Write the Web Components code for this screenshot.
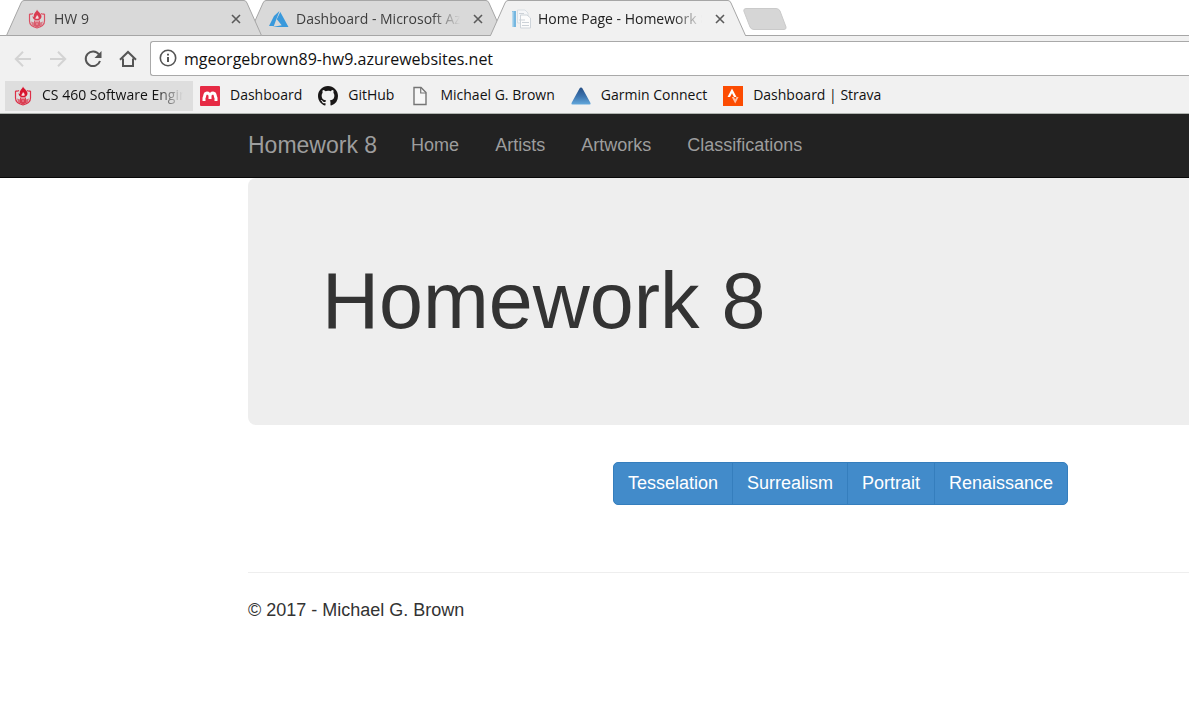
<!DOCTYPE html>
<html lang="en">
<head>
<meta charset="utf-8">
<title>Home Page - Homework 8</title>
<style>
  body { margin: 0; background: #fff; font-family: "Liberation Sans", Arial, sans-serif; }
</style>
</head>
<body>
<browser-frame>
  <tab-strip slot="tabs">
    <browser-tab class="front"><site-icon slot="icon" name="shield"></site-icon>HW 9</browser-tab>
    <browser-tab><site-icon slot="icon" name="azure"></site-icon>Dashboard - Microsoft Azure</browser-tab>
    <browser-tab active><site-icon slot="icon" name="pages"></site-icon>Home Page - Homework 8</browser-tab>
  </tab-strip>
  <address-bar slot="toolbar" url="mgeorgebrown89-hw9.azurewebsites.net"></address-bar>
  <bookmark-bar slot="bookmarks">
    <bookmark-item current><site-icon slot="icon" name="shield"></site-icon>CS 460 Software Engineering</bookmark-item>
    <bookmark-item><site-icon slot="icon" name="mendeley"></site-icon>Dashboard</bookmark-item>
    <bookmark-item><site-icon slot="icon" name="github"></site-icon>GitHub</bookmark-item>
    <bookmark-item><site-icon slot="icon" name="document"></site-icon>Michael G. Brown</bookmark-item>
    <bookmark-item><site-icon slot="icon" name="garmin"></site-icon>Garmin Connect</bookmark-item>
    <bookmark-item><site-icon slot="icon" name="strava"></site-icon>Dashboard | Strava</bookmark-item>
  </bookmark-bar>
  <site-navbar brand="Homework 8">
    <nav-link>Home</nav-link>
    <nav-link>Artists</nav-link>
    <nav-link>Artworks</nav-link>
    <nav-link>Classifications</nav-link>
  </site-navbar>
  <site-body>
    <jumbo-tron>Homework 8</jumbo-tron>
    <button-group>
      <group-button>Tesselation</group-button>
      <group-button>Surrealism</group-button>
      <group-button>Portrait</group-button>
      <group-button>Renaissance</group-button>
    </button-group>
    <site-footer>© 2017 - Michael G. Brown</site-footer>
  </site-body>
</browser-frame>

<script>
const define = (name, html, setup) => {
  const template = document.createElement('template');
  template.innerHTML = html;
  customElements.define(name, class extends HTMLElement {
    constructor() {
      super();
      this.attachShadow({ mode: 'open' }).append(template.content.cloneNode(true));
    }
    connectedCallback() { if (setup) setup(this, this.shadowRoot); }
  });
};

const icons = {
  shield: `<path d="M2.500 5Q4.500 5.500 6 4.500M17.500 5Q15.500 5.500 14 4.500" fill="none" stroke="#dc3048" stroke-width="1.300"/>
    <path d="M2.500 5V12C2.500 16 6 18 10 19C14 18 17.500 16 17.500 12V5" fill="none" stroke="#dc3048" stroke-width="1.200"/>
    <path d="M10 .5C11 3 14.500 4.500 14.500 7.500C14.500 9.500 13 10.500 12 11H8C7 10.500 5.500 9.500 5.500 7C6 7.500 6.700 8 7 7.500C6 4.500 9.500 3 10 .5Z" fill="#d9152f"/>
    <path d="M10 6C11.300 7.500 12 8 11.500 9.700H8.500C8 8.500 9.500 8 10 6Z" fill="#f9dfe2"/>
    <path d="M7 11.500H13V17L10 18.500L7 17Z" fill="#d9152f" opacity=".8"/>
    <path d="M4 12.500L7 13.500V17.500Q4.500 16 4 12.500ZM16 12.500L13 13.500V17.500Q15.500 16 16 12.500Z" fill="#d9152f" opacity=".6"/>
    <path d="M8 12.700H12M9 15H11" stroke="#f3b6be" stroke-width=".8"/>`,
  azure: `<path d="M10.500 2L5 7L0 17H4.800Z" fill="#3999dc"/><path d="M11.300 3L19.500 18H3.500L12.700 16.200L7.800 10.200Z" fill="#3999dc"/>`,
  pages: `<path d="M1 2H5V18H1Z" fill="#57a9dc"/><path d="M1 3L2.500 2V18H1Z" fill="#a9d5ee"/>
    <path d="M6.500 1H14L17 4V14H6.500Z" fill="#f6f8fa" stroke="#d3dae0"/>
    <path d="M9.500 6H16L19.500 9V19H9.500Z" fill="#fff" stroke="#c6ced5"/>
    <path d="M8 4.500H13M8 11H14M11 13.500H18M11 16.500H18" stroke="#c3cbd3"/>`,
  mendeley: `<rect width="20" height="20" rx="1" fill="#e62b45"/>
    <path d="M4 15V12C5.500 9 4 7.500 7 7C9 7 9 8.500 10 8.500S11 7 13 7C16 7.500 14.500 9 16 12V15" fill="none" stroke="#fff" stroke-width="3"/>
    <path d="M10 8V13" stroke="#fff" stroke-width="3"/>`,
  github: `<path transform="scale(1.25)" fill="#191717" d="M8 0C3.580 0 0 3.580 0 8c0 3.540 2.290 6.530 5.470 7.590.4.070.55-.17.55-.38 0-.19-.01-.82-.01-1.490-2.010.37-2.530-.49-2.690-.94-.09-.23-.48-.94-.82-1.130-.28-.15-.68-.52-.01-.53.63-.01 1.080.58 1.230.82.72 1.210 1.870.87 2.330.66.07-.52.28-.87.51-1.070-1.780-.2-3.640-.89-3.640-3.950 0-.87.31-1.590.82-2.150-.08-.2-.36-1.020.08-2.120 0 0 .67-.21 2.200.82A7.600 7.600 0 0 1 8 3.860c.68 0 1.360.09 2 .27 1.530-1.040 2.200-.82 2.200-.82.44 1.100.16 1.920.08 2.120.51.56.82 1.270.82 2.150 0 3.070-1.870 3.750-3.650 3.950.29.25.54.73.54 1.480 0 1.070-.01 1.930-.01 2.200 0 .21.15.46.55.38A8 8 0 0 0 16 8c0-4.420-3.580-8-8-8z"/>`,
  document: `<path d="M4 1.500H11L16 6.500V18.500H4Z" fill="#f7f7f7" stroke="#757575" stroke-width="1.400"/><path d="M10.700 1.500V7H16" fill="none" stroke="#757575" stroke-width="1.200"/>`,
  garmin: `<linearGradient id="g" x2="0" y2="1"><stop stop-color="#264f86"/><stop offset=".5" stop-color="#3b72ad"/><stop offset="1" stop-color="#63a8dc"/></linearGradient>
    <path d="M10 1.500Q11 1.500 11.500 2.500L19.500 17Q20 18.500 18.500 18.500H1.500Q0 18.500 .5 17L8.500 2.500Q9 1.500 10 1.500Z" fill="url(#g)"/>`,
  strava: `<rect width="20" height="20" fill="#fc4c02"/><path d="M9 2.500L13.500 11H11L9 7.200L7 11H4.500Z" fill="#fff"/><path d="M8.800 11H11L12.200 13.500L13.500 11H15.600L12.200 17.500Z" fill="#ffc0a5"/>`
};

define('site-icon', `
  <style>
    :host { display: block; flex: none; width: 20px; height: 20px; }
    svg { display: block; width: 100%; height: 100%; }
  </style>
  <svg viewBox="0 0 20 20" aria-hidden="true"></svg>`,
  (el, root) => { root.querySelector('svg').innerHTML = icons[el.getAttribute('name')]; });

define('browser-frame', `
  <style>
    :host { display: block; min-height: 100vh; overflow: hidden; }
    .chrome { background: #f1f1f1; border-bottom: 1px solid #b0b4b0; font-family: "Open Sans", "Segoe UI", sans-serif; }
  </style>
  <header class="chrome">
    <slot name="tabs"></slot>
    <slot name="toolbar"></slot>
    <slot name="bookmarks"></slot>
  </header>
  <slot></slot>`);

define('tab-strip', `
  <style>
    :host { display: flex; height: 36px; padding-left: 6px; background: linear-gradient(#a6a6a6, #a6a6a6) bottom / 100% 1px no-repeat #fff; }
    button { flex: none; width: 44px; height: 22px; margin: 8px 0 0 -3px; padding: 0; border: 0; background: none; }
    svg { display: block; }
  </style>
  <slot></slot>
  <button aria-label="New tab">
    <svg width="44" height="22" viewBox="0 0 44 22"><path d="M3 .5H33Q36 .5 37 3L43 19Q43.500 21.500 41 21.500H11Q8 21.500 7 19L.8 3Q.5 .5 3 .5Z" fill="#d6d6d6" stroke="#cacaca"/></svg>
  </button>`);

define('browser-tab', `
  <style>
    :host { display: grid; flex: 0 1 256px; height: 36px; position: relative; color: #3d3d3d; }
    :host(:not(:first-child)) { margin-left: -14px; }
    :host(.front) { z-index: 1; }
    :host([active]) { z-index: 2; color: #222; }
    .shape, .row { grid-area: 1 / 1; min-width: 0; }
    .shape { display: block; width: 100%; height: 36px; }
    .fill { fill: #d9d9d9; }
    .edge { fill: none; stroke: #a6a6a6; }
    :host([active]) .fill { fill: #f1f1f1; }
    .base { stroke: #a6a6a6; }
    :host([active]) .base { stroke: #f1f1f1; }
    .row { display: flex; align-items: center; padding: 2px 18px 0 21px; z-index: 1; }
    .title { flex: 1; min-width: 0; margin-left: 7px; overflow: hidden; white-space: nowrap; font-size: 14px; line-height: 20px;
      -webkit-mask-image: linear-gradient(to left, transparent, #000 28px); mask-image: linear-gradient(to left, transparent, #000 28px); }
    ::slotted(site-icon) { opacity: .8; }
    :host(:nth-child(2)) ::slotted(site-icon) { opacity: 1; }
    button { flex: none; display: grid; place-items: center; width: 16px; height: 16px; margin-left: 10px; padding: 0; border: 0; background: none; }
  </style>
  <svg class="shape" viewBox="0 0 256 36" preserveAspectRatio="none" aria-hidden="true">
    <path class="fill" d="M.5 35.500L15 3Q16 .5 18 .5H238Q240 .5 241 3L255.500 35.500Z"/>
    <path class="base" d="M1 35.500H255"/>
    <path class="edge" d="M.5 35.500L15 3Q16 .5 18 .5H238Q240 .5 241 3L255.500 35.500"/>
  </svg>
  <div class="row">
    <slot name="icon"></slot>
    <span class="title"><slot></slot></span>
    <button aria-label="Close tab"><svg width="10" height="10" viewBox="0 0 10 10"><path d="M1 1L9 9M9 1L1 9" stroke="#5a5a5a" stroke-width="1.600"/></svg></button>
  </div>`);

define('address-bar', `
  <style>
    :host { display: flex; align-items: center; height: 44px; padding-left: 10px; }
    .tool { flex: none; display: grid; place-items: center; width: 26px; height: 26px; margin-right: 9px; padding: 2px 0 0; border: 0; background: none; }
    svg { display: block; fill: none; stroke: #555; stroke-width: 2; }
    .tool:disabled svg { stroke: #d3d3d3; }
    .box { flex: 1; display: flex; align-items: center; gap: 7px; height: 33px; padding-left: 8px; border: 1px solid #a9a9a9; border-right: 0; border-radius: 3px 0 0 3px; background: #fff; }
    .box svg { flex: none; }
    input { flex: 1; min-width: 0; height: 32px; padding: 2px 0 0; box-sizing: border-box; border: 0; outline: 0; background: none; color: #111; font: 16px/30px "Open Sans", "Segoe UI", sans-serif; }
  </style>
  <button class="tool" aria-label="Back" disabled><svg width="18" height="18" viewBox="0 0 18 18"><path d="M17 9H2.500M9 1.800L1.800 9L9 16.200"/></svg></button>
  <button class="tool" aria-label="Forward" disabled><svg width="18" height="18" viewBox="0 0 18 18"><path d="M1 9H15.500M9 1.800L16.200 9L9 16.200"/></svg></button>
  <button class="tool" aria-label="Reload"><svg width="18" height="18" viewBox="0 0 18 18"><path d="M15 4.500A7.300 7.300 0 1 0 16 11"/><path d="M17.500 1V8H10.500Z" fill="#555" stroke="none"/></svg></button>
  <button class="tool" aria-label="Home"><svg width="18" height="18" viewBox="0 0 18 18"><path d="M1 9.700L9 2L17 9.700M4 8.500V16H14V8.500"/></svg></button>
  <div class="box">
    <svg width="18" height="18" viewBox="0 0 18 18" aria-hidden="true"><circle cx="9" cy="9" r="7.700" stroke-width="1.600"/><path d="M9 8V13M9 4.800V6.600"/></svg>
    <input type="text" aria-label="Address" spellcheck="false">
  </div>`,
  (el, root) => { root.querySelector('input').value = el.getAttribute('url'); });

define('bookmark-bar', `
  <style>
    :host { display: flex; align-items: center; gap: 16px; height: 31px; padding: 0 0 2px 5px; }
  </style>
  <slot></slot>`);

define('bookmark-item', `
  <style>
    :host { display: block; flex: none; }
    :host([current]) { width: 188px; margin-right: -9px; background: #dedede; }
    a { display: flex; align-items: center; gap: 10px; height: 30px; color: #111; font-size: 14px; line-height: 20px; text-decoration: none; white-space: nowrap; }
    span { padding-bottom: 2px; }
    :host([current]) a { gap: 9px; padding: 0 10px 0 8px; }
    :host([current]) span { overflow: hidden; -webkit-mask-image: linear-gradient(to left, transparent, #000 28px); mask-image: linear-gradient(to left, transparent, #000 28px); }
  </style>
  <a href="#"><slot name="icon"></slot><span><slot></slot></span></a>`);

define('site-navbar', `
  <style>
    :host { display: block; background: #222; border-bottom: 1px solid #080808; }
    nav { display: flex; align-items: center; gap: 34px; height: 61px; padding-bottom: 2px; margin-left: 248px; }
    .links { display: flex; gap: 36px; }
    .brand { color: #9d9d9d; font-size: 23px; line-height: 24px; text-decoration: none; }
  </style>
  <nav><a class="brand" href="#"></a><div class="links"><slot></slot></div></nav>`,
  (el, root) => { root.querySelector('.brand').textContent = el.getAttribute('brand'); });

define('nav-link', `
  <style>
    :host { display: block; font-size: 18px; line-height: 24px; }
    a { color: #9d9d9d; text-decoration: none; }
  </style>
  <a href="#"><slot></slot></a>`);

define('site-body', `
  <style>
    :host { display: block; width: 1185px; margin-left: 248px; color: #333; font-size: 18px; line-height: 24px; }
  </style>
  <main><slot></slot></main>`);

define('jumbo-tron', `
  <style>
    :host { display: block; padding: 79px 74px 81px; border-radius: 8px; background: #eee; }
    h1 { margin: 0; font-size: 79px; line-height: 87px; font-weight: 400; }
  </style>
  <h1><slot></slot></h1>`);

define('button-group', `
  <style>
    :host { display: flex; justify-content: center; margin: 37px 0 67px; }
  </style>
  <slot></slot>`);

define('group-button', `
  <style>
    :host { display: block; }
    :host(:not(:first-child)) { margin-left: -1px; }
    button { display: block; height: 43px; padding: 0 14px 2px; border: 1px solid #357ebd; background: #428bca; color: #fff; font: 18px/24px "Liberation Sans", Arial, sans-serif; }
    :host(:first-child) button { border-radius: 5px 0 0 5px; }
    :host(:last-child) button { border-radius: 0 5px 5px 0; }
  </style>
  <button type="button"><slot></slot></button>`);

define('site-footer', `
  <style>
    :host { display: block; }
    footer { padding-top: 25px; border-top: 1px solid #eee; }
    p { margin: 0; }
  </style>
  <footer><p><slot></slot></p></footer>`);
</script>
</body>
</html>
